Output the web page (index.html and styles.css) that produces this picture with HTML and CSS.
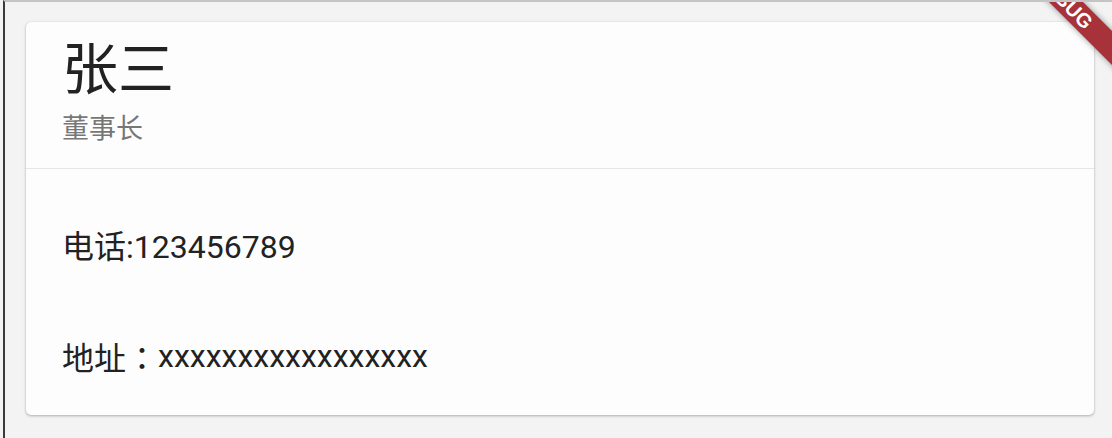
FILE: index.html
```html
<!DOCTYPE html>
<html lang="zh">
<head>
<meta charset="utf-8">
<link rel="stylesheet" href="styles.css">
</head>
<body>
<div class="frame">
  <div class="card">
    <div class="header">
      <div class="name">张三</div>
      <div class="role">董事长</div>
    </div>
    <div class="divider"></div>
    <div class="rows">
      <div class="row">电话:123456789</div>
      <div class="row">地址<span class="fw-colon">：</span>xxxxxxxxxxxxxxxxx</div>
    </div>
  </div>
  <div class="banner">DEBUG</div>
</div>
</body>
</html>
```
FILE: styles.css
```css
html, body {
  margin: 0;
  padding: 0;
}
body {
  width: 1112px;
  height: 438px;
  overflow: hidden;
  background: #f3f3f3;
  font-family: Roboto, "Noto Sans CJK SC", sans-serif;
}
.frame {
  position: relative;
  margin-left: 3px;
  border-left: 2px solid #3a3a3a;
  border-top: 2px solid #c4c4c4;
  overflow: hidden;
  box-sizing: border-box;
  height: 438px;
}
.card {
  margin: 20px 18px 0 21px;
  height: 393px;
  background: #fdfdfd;
  border-radius: 5px;
  box-shadow: 0 1px 3px rgba(0,0,0,0.28), 0 0 1px rgba(0,0,0,0.12);
  display: flex;
  flex-direction: column;
}
.header {
  padding: 16px 36px 21px;
  display: flex;
  flex-direction: column;
  gap: 9px;
}
.name {
  font-size: 56px;
  line-height: 64px;
  color: #222;
}
.role {
  font-size: 27px;
  line-height: 36px;
  color: #777;
}
.divider {
  height: 1px;
  background: #e6e6e6;
}
.rows {
  padding-top: 19px;
  display: flex;
  flex-direction: column;
}
.row {
  height: 112px;
  display: flex;
  align-items: center;
  padding-left: 36px;
  font-size: 32px;
  color: #222;
}
.fw-colon {
  font-family: "Noto Sans CJK TC", sans-serif;
}
.banner {
  position: absolute;
  left: 959px;
  top: -14px;
  width: 200px;
  height: 24px;
  line-height: 24px;
  text-align: center;
  transform: rotate(45deg);
  background: #a8323a;
  color: #fff;
  font-family: "Liberation Sans", sans-serif;
  font-weight: 900;
  font-size: 20px;
  box-shadow: 0 0 6px rgba(0,0,0,0.4);
}
```
